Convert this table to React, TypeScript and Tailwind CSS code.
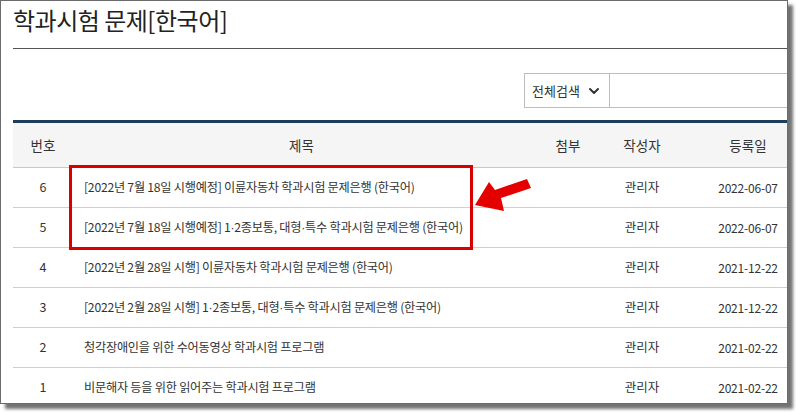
import { ChevronDown } from "lucide-react";

type Row = { no: number; title: string; writer: string; date: string };

const rows: Row[] = [
  { no: 6, title: "[2022년 7월 18일 시행예정] 이륜자동차 학과시험 문제은행 (한국어)", writer: "관리자", date: "2022-06-07" },
  { no: 5, title: "[2022년 7월 18일 시행예정] 1·2종보통, 대형·특수 학과시험 문제은행 (한국어)", writer: "관리자", date: "2022-06-07" },
  { no: 4, title: "[2022년 2월 28일 시행] 이륜자동차 학과시험 문제은행 (한국어)", writer: "관리자", date: "2021-12-22" },
  { no: 3, title: "[2022년 2월 28일 시행] 1·2종보통, 대형·특수 학과시험 문제은행 (한국어)", writer: "관리자", date: "2021-12-22" },
  { no: 2, title: "청각장애인을 위한 수어동영상 학과시험 프로그램", writer: "관리자", date: "2021-02-22" },
  { no: 1, title: "비문해자 등을 위한 읽어주는 학과시험 프로그램", writer: "관리자", date: "2021-02-22" },
];

const font = "font-['Malgun_Gothic','Noto_Sans_CJK_KR',sans-serif]";

// the middle dot is narrow in the original font, so set it in a latin face
function Title({ text }: { text: string }) {
  const parts = text.split("·");
  return (
    <>
      {parts.map((p, i) => (
        <span key={i}>
          {i > 0 && <span className="font-['Liberation_Sans',sans-serif]">·</span>}
          {p}
        </span>
      ))}
    </>
  );
}

export default function App() {
  return (
    <div className={`relative w-[796px] h-[412px] bg-white overflow-hidden ${font}`}>
      {/* framed screenshot */}
      <div className="w-[788px] h-[404px] border border-[#6b6b6b] overflow-hidden bg-white shadow-[5px_5px_3px_rgba(0,0,0,0.55)]">
        <div className="pl-[12px] pt-[3px] w-[840px]">
          <h1 className="text-[24px] leading-[32px] text-[#222] tracking-[-0.5px]">학과시험 문제[한국어]</h1>
          <div className="mt-[12px] h-px bg-[#555]" />

          {/* search */}
          <div className="mt-[24px] pl-[511px] flex h-[35px]">
            <div className="w-[86px] border border-[#bdbdbd] flex items-center justify-center gap-[6px] text-[13px] text-[#333]">
              <span>전체검색</span>
              <ChevronDown size={16} strokeWidth={3} className="text-[#333]" />
            </div>
            <div className="flex-1 border border-l-0 border-[#bdbdbd]" />
          </div>

          {/* table */}
          <div className="mt-[12px] border-t-[3px] border-[#1e3c5c]">
            <div className="flex h-[45px] items-center bg-[#f5f5f5] border-b border-[#c8c8c8] text-[13.5px] text-[#333]">
              <div className="w-[60px] text-center">번호</div>
              <div className="w-[457px] text-center">제목</div>
              <div className="w-[76px] text-center">첨부</div>
              <div className="w-[72px] text-center">작성자</div>
              <div className="w-[140px] text-center">등록일</div>
            </div>
            {rows.map((r) => (
              <div key={r.no} className="flex h-[40px] items-center border-b border-[#cfcfcf] text-[12.2px] text-[#333]">
                <div className="w-[60px] text-center text-[12.5px]">{r.no}</div>
                <div className="w-[457px] pl-[11px] whitespace-nowrap tracking-[-0.25px]">
                  <Title text={r.title} />
                </div>
                <div className="w-[76px]" />
                <div className="w-[72px] text-center text-[12.5px]">{r.writer}</div>
                <div className="w-[140px] text-center text-[12px] tracking-[-0.2px]">{r.date}</div>
              </div>
            ))}
          </div>
        </div>
      </div>

      {/* annotation overlay */}
      <div className="absolute left-[69px] top-[165px] w-[404px] h-[85px] border-[3px] border-[#d90000]" />
      <svg className="absolute left-[470px] top-[176px]" width="64" height="38" viewBox="0 0 64 38">
        <polygon points="57,3 61,12 31,22 34,35 5,29 19,6 25,14" fill="#e50000" />
      </svg>
    </div>
  );
}
